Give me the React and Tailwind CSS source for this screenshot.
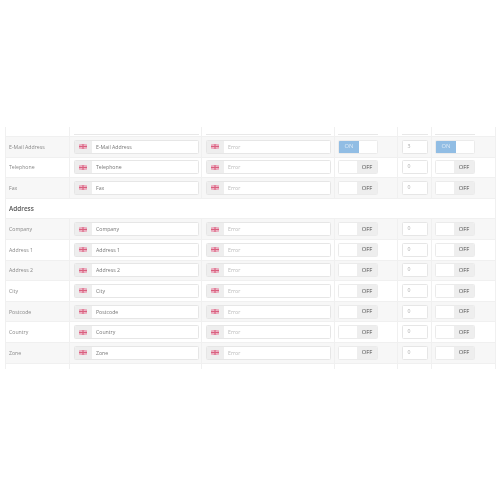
const ROWS = [
  { label: "E-Mail Address", on: true, n: "3" },
  { label: "Telephone" },
  { label: "Fax" },
  { heading: "Address" },
  { label: "Company" },
  { label: "Address 1" },
  { label: "Address 2" },
  { label: "City" },
  { label: "Postcode" },
  { label: "Country" },
  { label: "Zone" },
];

const GRID = "grid grid-cols-[63px_132px_133px_63px_34px_1fr]";
const CELL = "flex items-center border-l border-[#f0f0f0]";

function Flag() {
  return (
    <svg width="8" height="5" viewBox="0 0 8 5" className="block">
      <rect width="8" height="5" fill="#e9a5b9" />
      <path d="M0 0L8 5M8 0L0 5" stroke="#efc3d0" strokeWidth="0.7" />
      <path d="M4 0V5M0 2.5H8" stroke="#d9607f" strokeWidth="1" />
    </svg>
  );
}

function LangInput({ value, placeholder }) {
  return (
    <div className="flex h-[14px] w-full overflow-hidden rounded-[1.5px] border border-[#e6e6e6] bg-white">
      <div className="flex w-[17px] shrink-0 items-center justify-center bg-[#eeeeee]">
        <Flag />
      </div>
      <div className={`flex items-center pl-[4.5px] text-[5.2px] ${placeholder ? "text-[#bbbbbb]" : "text-[#777777]"}`}>
        <span className="translate-y-[0.5px]">{value || placeholder}</span>
      </div>
    </div>
  );
}

function Toggle({ on }) {
  return (
    <div className="flex h-[14px] w-[40px] overflow-hidden rounded-[1.5px] border border-[#ebebeb] bg-white text-[5.8px]">
      {on ? (
        <>
          <div className="flex w-[20px] items-center justify-center bg-[#91bde4] text-[#dbe9f5]">ON</div>
          <div className="flex-1 bg-white" />
        </>
      ) : (
        <>
          <div className="flex-1 bg-white" />
          <div className="flex w-[20px] items-center justify-center bg-[#eeeeee] text-[#555555]">OFF</div>
        </>
      )}
    </div>
  );
}

function Row({ row, shaded }) {
  if (row.heading) {
    return (
      <div className="flex h-[20.6px] items-center border-b border-[#f0f0f0] bg-white pl-[3px] text-[6.4px] font-semibold text-[#555555]">
        {row.heading}
      </div>
    );
  }
  return (
    <div className={`${GRID} h-[20.6px] border-b border-[#f0f0f0] ${shaded ? "bg-[#f7f7f7]" : "bg-white"}`}>
      <div className="flex items-center pl-[3px] text-[5.2px] text-[#888888]">
        <span className="translate-y-[0.5px]">{row.label}</span>
      </div>
      <div className={`${CELL} pl-[3.5px] pr-[2.5px]`}>
        <LangInput value={row.label} />
      </div>
      <div className={`${CELL} pl-[3.5px] pr-[3px]`}>
        <LangInput placeholder="Error" />
      </div>
      <div className={`${CELL} pl-[3px]`}>
        <Toggle on={row.on} />
      </div>
      <div className={`${CELL} pl-[3.5px] pr-[3px]`}>
        <div className="flex h-[14px] w-full items-center rounded-[1.5px] border border-[#e6e6e6] bg-white pl-[5px] text-[5.2px] text-[#aaaaaa]">
          {row.n || "0"}
        </div>
      </div>
      <div className={`${CELL} pl-[3px]`}>
        <Toggle on={row.on} />
      </div>
    </div>
  );
}

export default function App() {
  return (
    <div className="h-[500px] w-[500px] overflow-hidden bg-white pt-[126.5px] font-['Open_Sans',sans-serif]">
      <div className="ml-[5px] mr-[4px] border-l border-r border-[#f0f0f0] blur-[0.3px]">
        <div className={`${GRID} h-[10.5px] border-b border-[#f0f0f0]`}>
          <div />
          <div className={`${CELL} pl-[3.5px] pr-[2.5px]`}><div className="mt-[6px] h-[1px] w-full bg-[#e8e8e8]" /></div>
          <div className={`${CELL} pl-[3.5px] pr-[3px]`}><div className="mt-[6px] h-[1px] w-full bg-[#e8e8e8]" /></div>
          <div className={`${CELL} pl-[3px]`}><div className="mt-[6px] h-[1px] w-[40px] bg-[#e8e8e8]" /></div>
          <div className={`${CELL} pl-[3.5px] pr-[3px]`}><div className="mt-[6px] h-[1px] w-full bg-[#e8e8e8]" /></div>
          <div className={`${CELL} pl-[3px]`}><div className="mt-[6px] h-[1px] w-[40px] bg-[#e8e8e8]" /></div>
        </div>
        {ROWS.map((r, i) => (
          <Row key={r.label || r.heading} row={r} shaded={i % 2 === 0} />
        ))}
        <div className={`${GRID} h-[5px]`}>
          <div />
          <div className={CELL} />
          <div className={CELL} />
          <div className={CELL} />
          <div className={CELL} />
          <div className={CELL} />
        </div>
      </div>
    </div>
  );
}
